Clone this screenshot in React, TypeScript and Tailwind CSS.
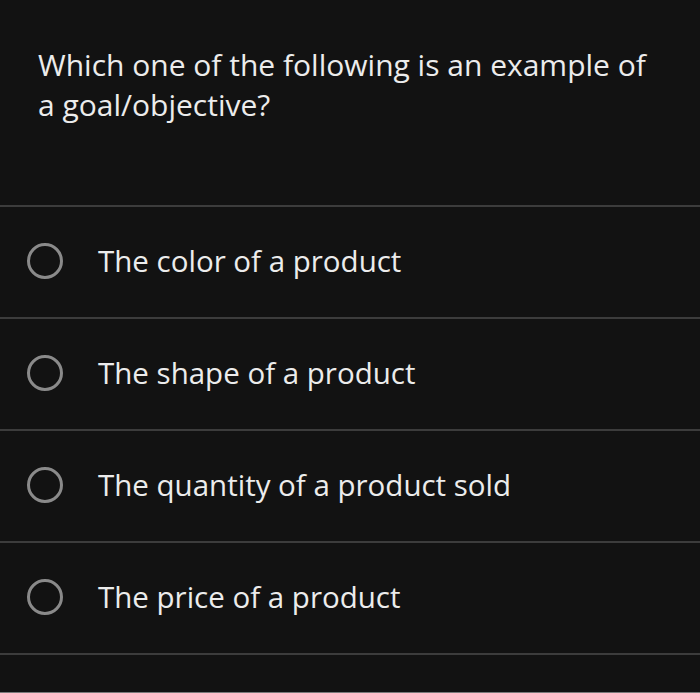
const options = [
  'The color of a product',
  'The shape of a product',
  'The quantity of a product sold',
  'The price of a product',
];

export default function App() {
  return (
    <div
      className="w-[700px] h-[693px] bg-[#121212] text-[#ececec] overflow-hidden flex flex-col"
      style={{ fontFamily: '"Open Sans", sans-serif' }}
    >
      <div className="h-[207px] pl-[38px] pr-4 pt-[45px] border-b-2 border-[#3c3c3c] shrink-0">
        <p className="text-[30px] leading-[40px]">
          Which one of the following is an example of
          <br />
          a goal/objective?
        </p>
      </div>
      {options.map((o) => (
        <div
          key={o}
          className="h-[112px] shrink-0 flex items-center border-b-2 border-[#3c3c3c] pl-[27px] pb-[2px]"
        >
          <span className="w-[36px] h-[36px] rounded-full border-[3px] border-[#8a8a8a] shrink-0" />
          <span className="ml-[35px] text-[29.5px] leading-[40px]">{o}</span>
        </div>
      ))}
      <div className="flex-1" />
      <div className="h-px bg-[#7a7a7a] shrink-0" />
    </div>
  );
}
